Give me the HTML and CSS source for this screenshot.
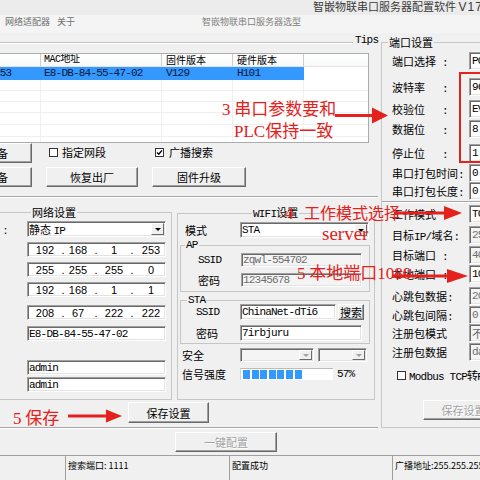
FILE: index.html
```html
<!DOCTYPE html>
<html lang="zh-CN">
<head>
<meta charset="utf-8">
<title>智嵌物联串口服务器配置软件</title>
<link rel="stylesheet" href="styles.css">
</head>
<body>
<div class="win">
  <div class="titlebar">智嵌物联串口服务器配置软件 <span class="ver">V17</span></div>
  <div class="menubar">
    <span class="mi mi1">网络适配器</span>
    <span class="mi mi2">关于</span>
    <span class="mi mi3">智嵌物联串口服务器选型</span>
  </div>
  <div class="main">
    <div class="leftcol">
      <div class="tipsbar"><span class="tline"></span><span class="tlab m">Tips</span></div>
      <div class="tbl">
        <div class="trow thead">
          <span class="c c1"></span><span class="c c2 hm">MAC地址</span><span class="c c3">固件版本</span><span class="c c4">硬件版本</span><span class="c c5"></span>
        </div>
        <div class="trow sel m">
          <span class="c c1"><span class="shift">192.168.1.253</span></span><span class="c c2">E8-DB-84-55-47-02</span><span class="c c3">V129</span><span class="c c4">H101</span><span class="c c5"></span>
        </div>
        <div class="trow"><span class="c c1"></span><span class="c c2"></span><span class="c c3"></span><span class="c c4"></span><span class="c c5"></span></div>
        <div class="trow"><span class="c c1"></span><span class="c c2"></span><span class="c c3"></span><span class="c c4"></span><span class="c c5"></span></div>
        <div class="trow"><span class="c c1"></span><span class="c c2"></span><span class="c c3"></span><span class="c c4"></span><span class="c c5"></span></div>
        <div class="trow h12"><span class="c c1"></span><span class="c c2"></span><span class="c c3"></span><span class="c c4"></span><span class="c c5"></span></div>
        <div class="trow h12"><span class="c c1"></span><span class="c c2"></span><span class="c c3"></span><span class="c c4"></span><span class="c c5"></span></div>
        <div class="trow last"><span class="c c1"></span><span class="c c2"></span><span class="c c3"></span><span class="c c4"></span><span class="c c5"></span></div>
      </div>

      <div class="brow">
        <div class="btn bw bfirst">搜索设备</div>
        <span class="chk ck1"></span><span class="cl cl1">指定网段</span>
        <span class="chk ck2"><svg width="7" height="7" viewBox="0 0 7 7"><path d="M1 3.4 L2.8 5.3 L6 1.4" fill="none" stroke="#000" stroke-width="1.4"/></svg></span><span class="cl cl2">广播搜索</span>
      </div>
      <div class="brow brow2">
        <div class="btn bw bfirst">配置设备</div>
        <div class="btn bw bnext">恢复出厂</div>
        <div class="btn bw bnext bwide">固件升级</div>
      </div>
      <div class="hsep hsep1"></div>

      <div class="groups">
        <fieldset class="grp net">
          <legend>网络设置</legend>
          <div class="nrow mt3 h16"><span class="nl">:</span><div class="fld combo nf"><span>静态 <span class="m">IP</span></span><span class="dd"></span></div></div>
          <div class="nrow mt5"><span class="nl"></span><div class="fld nf ip"><span>192</span><span>.</span><span>168</span><span>.</span><span>1</span><span>.</span><span>253</span></div></div>
          <div class="nrow mt5"><span class="nl"></span><div class="fld nf ip"><span>255</span><span>.</span><span>255</span><span>.</span><span>255</span><span>.</span><span>0</span></div></div>
          <div class="nrow mt5"><span class="nl"></span><div class="fld nf ip"><span>192</span><span>.</span><span>168</span><span>.</span><span>1</span><span>.</span><span>1</span></div></div>
          <div class="nrow mt8"><span class="nl"></span><div class="fld nf ip"><span>208</span><span>.</span><span>67</span><span>.</span><span>222</span><span>.</span><span>222</span></div></div>
          <div class="nrow mt6"><span class="nl"></span><div class="fld nf m">E8-DB-84-55-47-02</div></div>
          <div class="nrow mt19"><span class="nl"></span><div class="fld nf m">admin</div></div>
          <div class="nrow mt2"><span class="nl"></span><div class="fld nf m">admin</div></div>
        </fieldset>

        <fieldset class="grp wifi">
          <legend><span class="m">WIFI</span>设置</legend>
          <div class="wrow mode mt2"><span class="wl">模式</span><div class="fld combo wcombo"><span class="m">STA</span><span class="dd"></span></div></div>
          <fieldset class="grp sub ap">
            <legend class="m">AP</legend>
            <div class="srow mt2"><span class="sl m">SSID</span><div class="fld dis sf m">zqwl-554702</div></div>
            <div class="srow mt6"><span class="sl">密码</span><div class="fld dis sf m">12345678</div></div>
          </fieldset>
          <fieldset class="grp sub sta">
            <legend class="m">STA</legend>
            <div class="trow2 mtm2"><span class="tl m">SSID</span><div class="fld tf1 m">ChinaNet-dTi6</div><div class="btn sbtn">搜索</div></div>
            <div class="trow2 mt5"><span class="tl">密码</span><div class="fld tf2 m">7irbjuru</div></div>
          </fieldset>
          <div class="wrow2 mt4 h14"><span class="wl2">安全</span><div class="fld combo dis sc1"><span></span><span class="dd ddis"></span></div><div class="fld combo dis sc2"><span></span><span class="dd ddis"></span></div></div>
          <div class="wrow2 mt5 h13"><span class="wl2">信号强度</span><div class="bar"><span class="fill"></span></div><span class="pct m">57%</span></div>
        </fieldset>
      </div>

      <div class="saverow"><div class="btn savebtn">保存设置</div></div>
      <div class="hsep hsep2"></div>
      <div class="cfgrow"><div class="btn dis cfgbtn">一键配置</div></div>
    </div>

    <fieldset class="grp port">
      <legend>端口设置</legend>
      <div class="prow mt4"><span class="plab"><span class="pn">端口选择</span><span class="m">:</span></span><div class="fld pf m">PORT1</div></div>
      <div class="prow mt8"><span class="plab"><span class="pn">波特率</span><span class="m">:</span></span><div class="fld pf m">9600</div></div>
      <div class="prow mt4"><span class="plab"><span class="pn">校验位</span><span class="m">:</span></span><div class="fld pf m">EVEN</div></div>
      <div class="prow mt2"><span class="plab"><span class="pn">数据位</span><span class="m">:</span></span><div class="fld pf m">8</div></div>
      <div class="prow mt6"><span class="plab"><span class="pn">停止位</span><span class="m">:</span></span><div class="fld pf m">1</div></div>
      <div class="prow mt2"><span class="plab">串口打包时间<span class="m">:</span></span><div class="fld pf m">0</div></div>
      <div class="prow"><span class="plab">串口打包长度<span class="m">:</span></span><div class="fld pf m">0</div></div>
      <div class="psep"></div>
      <div class="prow mt2"><span class="plab"><span class="pn">工作模式</span><span class="m">:</span></span><div class="fld pf m">TCP Server</div></div>
      <div class="prow mt3"><span class="plab">目标<span class="lm">IP/</span>域名<span class="m">:</span></span><div class="fld pf dis m">255.255.255.255</div></div>
      <div class="prow mt2"><span class="plab"><span class="pn">目标端口</span><span class="m">:</span></span><div class="fld pf dis m">4001</div></div>
      <div class="prow mt1"><span class="plab"><span class="pn">本地端口</span><span class="m">:</span></span><div class="fld pf m">1030</div></div>
      <div class="prow mt4"><span class="plab">心跳包数据<span class="m">:</span></span><div class="fld pf dis m">20 00</div></div>
      <div class="prow mt1"><span class="plab">心跳包间隔<span class="m">:</span></span><div class="fld pf dis m">0</div></div>
      <div class="prow"><span class="plab">注册包模式</span><div class="fld pf dis">不启用</div></div>
      <div class="prow mt1"><span class="plab">注册包数据</span><div class="fld pf dis m">data</div></div>
      <div class="prow mt5"><span class="chk ck3"></span><span class="cl m cl3">Modbus TCP转RTU</span></div>
      <div class="prow mt16 h20"><div class="btn dis pbtn">保存设置</div></div>
    </fieldset>
  </div>

  <div class="status">
    <div class="sp sp1"></div>
    <div class="sp sp2">搜索端口: 1111</div>
    <div class="sp sp3">配置成功</div>
    <div class="sp sp4">广播地址:255.255.255.255</div>
  </div>
</div>

<div class="annot">
  <div class="redbox"></div>
  <div class="rt a1"><span class="rs">3</span> 串口参数要和</div>
  <div class="rt a2"><span class="rs">PLC</span>保持一致</div>
  <div class="rt a3"><span class="rs">4</span></div>
  <div class="rt a4">工作模式选择</div>
  <div class="rt a5"><span class="rs">server</span></div>
  <div class="rt a6"><span class="rs">5</span> 本地端口<span class="rs">1080</span></div>
  <div class="rt a7"><span class="rs">5</span> 保存</div>
  <svg class="arrows" width="480" height="480" viewBox="0 0 480 480">
    <g fill="#e4211b" stroke="none">
      <rect x="335" y="114" width="40" height="3"/>
      <polygon points="372,107.5 388,115.5 372,123.5"/>
      <rect x="394" y="211.5" width="52" height="3"/>
      <polygon points="444,206 462,213 444,220"/>
      <rect x="392" y="274.5" width="57" height="3"/>
      <polygon points="447,269 468,276 447,283"/>
      <rect x="68" y="414.5" width="41" height="3"/>
      <polygon points="106,409.5 122,416 106,422.5"/>
    </g>
  </svg>
</div>
</body>
</html>
```

FILE: styles.css
```css
* { box-sizing: border-box; margin: 0; padding: 0; }
html, body { width: 480px; height: 480px; overflow: hidden; }
body {
  position: relative;
  background: #f0f0f0;
  font-family: "Noto Sans CJK SC", "Liberation Sans", sans-serif;
  font-size: 11px;
  color: #000;
}
.m { font-family: "Liberation Mono", "Noto Sans CJK SC", monospace; letter-spacing: -0.8px; }
.lm { font-family: "Liberation Mono", monospace; letter-spacing: -0.8px; vertical-align: 0; }

.win { width: 480px; height: 480px; overflow: hidden; display: flex; flex-direction: column; }

.titlebar {
  height: 15px; line-height: 12px; padding-left: 313px; white-space: nowrap;
  color: #3a3a3a; font-size: 11px; background: #ececec;
}
.ver { font-family: "Liberation Sans", sans-serif; font-size: 12px; letter-spacing: 1px; }
.menubar {
  height: 18px; display: flex; align-items: flex-start; padding-top: 1px;
  font-size: 9px; line-height: 12px; color: #707070; white-space: nowrap; background: #f4f4f4;
}
.mi1 { margin-left: 5px; }
.mi2 { margin-left: 7px; }
.mi3 { margin-left: 127px; color: #808080; }

.main { height: 422px; display: grid; grid-template-columns: 381px 99px; }
.leftcol { display: flex; flex-direction: column; width: 381px; }

.brow > *, .nrow > *, .wrow > *, .wrow2 > *, .srow > *, .trow2 > *, .prow > *, .plab > * { flex-shrink: 0; }

.tipsbar { height: 20px; display: flex; align-items: center; }
.tline { width: 353px; height: 2px; border-top: 1px solid #c4c4c4; border-bottom: 1px solid #fff; }
.tlab { align-self: flex-start; margin-top: 1px; margin-left: 2px; line-height: 12px; }

/* table */
.tbl {
  width: 369px; height: 90px; background: #fff; overflow: hidden;
  border: 1px solid #acacac; border-left: 0;
}
.trow { display: flex; height: 11px; border-bottom: 1px solid #efefef; line-height: 11px; }
.trow.h12 { height: 12px; }
.trow.last { border-bottom: 0; height: 6px; }
.trow.thead {
  height: 13px; line-height: 12px; font-size: 10px; border-bottom: 1px solid #e2e2e2;
  background: linear-gradient(#ffffff, #f7f8f9);
}
.trow.sel { height: 13px; line-height: 13px; border-bottom: 0; }
.c { border-right: 1px solid #f0f0f0; overflow: hidden; white-space: nowrap; padding-left: 4px; flex-shrink: 0; }
.thead .c { border-right-color: #cdcdcd; }
.c1 { width: 41px; padding-left: 0; }
.c2 { width: 121px; padding-left: 3px; }
.c3 { width: 71px; }
.c4 { width: 71px; }
.c5 { flex: 1 1 0; border-right: 0; }
.hm { font-family: "Liberation Mono", "Noto Sans CJK SC", monospace; letter-spacing: -0.5px; }
.sel .c1, .sel .c2, .sel .c3, .sel .c4 { background: #3399ff; color: #06173a; border-right-color: #3399ff; }
.shift { margin-left: -64px; }

/* buttons */
.btn {
  display: flex; align-items: center; justify-content: center; height: 20px;
  background: #f0f0f0; white-space: nowrap; font-size: 11px;
  border: 1px solid; border-color: #ffffff #696969 #696969 #ffffff;
  box-shadow: inset -1px -1px 0 #a0a0a0;
}
.btn.dis { color: #a3a3a3; text-shadow: 1px 1px 0 #fff; }
.brow { height: 20px; display: flex; align-items: center; }
.brow2 { margin-top: 4px; }
.bw { width: 92px; }
.bfirst { margin-left: -60px; }
.bnext { margin-left: 14px; }
.bwide { width: 94px; }

.chk {
  width: 9px; height: 9px; border: 1px solid #333; background: #fff;
  display: flex; align-items: center; justify-content: center; margin-bottom: 2px;
}
.cl { margin-bottom: 2px; white-space: nowrap; }
.ck1 { margin-left: 17px; }
.cl1 { margin-left: 4px; }
.ck2 { margin-left: 49px; }
.cl2 { margin-left: 5px; }
.ck3 { margin-left: 5px; margin-bottom: 0; }
.cl3 { margin-left: 3px; margin-bottom: 0; }

.hsep { width: 378px; height: 2px; border-top: 1px solid #a8a8a8; border-bottom: 1px solid #fff; }
.hsep1 { margin-top: 9px; }
.hsep2 { margin-top: 4px; }

/* group boxes */
.grp { border: 1px solid #c6c6c6; min-width: 0; padding: 0; }
.grp legend { padding: 0 1px; line-height: 12px; font-size: 11px; }
.groups { display: flex; align-items: flex-start; margin-top: 8px; height: 194px; }
.groups > * { flex-shrink: 0; }
.net { width: 236px; height: 194px; margin-left: -64px; }
.net legend { margin-left: 94px; }
.wifi { width: 198px; height: 194px; margin-left: 5px; }
.wifi legend { margin-left: 74px; }

.mt1 { margin-top: 1px; } .mt2 { margin-top: 2px; } .mt3 { margin-top: 3px; }
.mt4 { margin-top: 4px; } .mt5 { margin-top: 5px; } .mt6 { margin-top: 6px; }
.mt8 { margin-top: 8px; } .mt16 { margin-top: 16px; } .mt19 { margin-top: 19px; }
.mtm2 { margin-top: -2px; }

/* fields */
.fld {
  background: #fff; height: 15px; display: flex; align-items: center;
  padding-left: 1px; white-space: nowrap; overflow: hidden;
  border: 1px solid; border-color: #a0a0a0 #ffffff #ffffff #a0a0a0;
  box-shadow: inset 1px 1px 0 #696969, inset -1px -1px 0 #e3e3e3;
}
.fld.dis { background: #f4f4f4; color: #6d6d6d; }
.combo { padding-right: 1px; }
.dd {
  margin-left: auto; width: 13px; height: calc(100% - 2px);
  background: #f0f0f0; border: 1px solid; border-color: #fff #696969 #696969 #fff;
  display: flex; align-items: center; justify-content: center;
}
.dd::after {
  content: ""; border-top: 3px solid #000;
  border-left: 3px solid transparent; border-right: 3px solid transparent;
}
.ddis::after { border-top-color: #a0a0a0; }

.nrow { display: flex; align-items: center; height: 15px; }
.nrow.h16 { height: 16px; }
.nrow.h16 .fld { height: 16px; }
.nl { width: 90px; padding-left: 67px; }
.nf { width: 139px; }
.ip {
  display: grid; grid-template-columns: 32px 4px 26px 10px 26px 10px 1fr;
  font-family: "Liberation Sans", sans-serif; font-size: 11px; text-align: center;
}

.wrow { display: flex; align-items: center; height: 16px; padding-left: 7px; }
.wl { width: 55px; }
.wcombo { width: 129px; height: 16px; }
.sub { width: 190px; margin-left: 2px; }
.ap { height: 53px; margin-top: 1px; }
.ap legend { margin-left: 4px; }
.sta { height: 50px; margin-top: 2px; }
.sta legend { margin-left: 6px; }
.srow { display: flex; align-items: center; height: 14px; padding-left: 17px; }
.sl { width: 43px; }
.sf { width: 121px; height: 14px; }
.trow2 { display: flex; align-items: center; height: 16px; padding-left: 15px; }
.tl { width: 44px; }
.tf1 { width: 96px; height: 16px; }
.tf2 { width: 122px; height: 16px; }
.sbtn { width: 26px; height: 16px; margin-left: 2px; }
.wrow2 { display: flex; align-items: center; padding-left: 4px; }
.h14 { height: 14px; }
.h13 { height: 13px; }
.wl2 { width: 58px; white-space: nowrap; }
.sc1 { width: 74px; height: 14px; }
.sc2 { width: 49px; height: 14px; margin-left: 4px; }
.bar {
  width: 93px; height: 12px; background: #fff; padding: 1px 0 0 2px;
  border-top: 1px solid #bcbcbc; border-left: 1px solid #d4d4d4;
}
.fill {
  display: block; width: 60px; height: 9px;
  background: repeating-linear-gradient(90deg, #3399ff 0 7px, transparent 7px 8.6px);
}
.pct { margin-left: 4px; }

.saverow { display: flex; margin-top: 2px; height: 21px; }
.savebtn { margin-left: 128px; width: 81px; height: 21px; }
.cfgrow { display: flex; margin-top: 3px; height: 20px; }
.cfgbtn { margin-left: 175px; width: 102px; }

/* right port settings */
.port { width: 130px; height: 392px; margin-top: 3px; }
.port legend { margin-left: 6px; }
.prow { display: flex; align-items: center; height: 18px; padding-left: 10px; }
.prow.h20 { height: 20px; }
.plab { width: 77px; display: flex; align-items: baseline; white-space: nowrap; }
.pn { width: 50px; }
.pf { width: 60px; height: 18px; padding-left: 2px; }
.psep { height: 2px; margin-top: 1px; border-top: 1px solid #a8a8a8; border-bottom: 1px solid #fff; }
.pbtn { margin-left: 31px; width: 81px; }

/* status bar */
.status { height: 25px; display: flex; border-top: 1px solid #a0a0a0; font-size: 9px; line-height: 12px; }
.sp { padding: 4px 0 0 2px; white-space: nowrap; overflow: hidden; border-left: 1px solid #a0a0a0; flex-shrink: 0; }
.sp1 { width: 65px; border-left: 0; }
.sp2 { width: 164px; }
.sp3 { width: 163px; }
.sp4 { flex: 1 1 0; }

/* annotations (overlay) */
.annot { position: absolute; left: 0; top: 0; width: 480px; height: 480px; pointer-events: none; }
.redbox { position: absolute; left: 459px; top: 72px; width: 40px; height: 91px; border: 2px solid #e4211b; }
.rt {
  position: absolute; color: #e4211b; font-size: 17px; line-height: 17px; white-space: nowrap;
  font-family: "Noto Sans CJK SC", sans-serif;
}
.rs { font-family: "Liberation Serif", serif; }
.a1 { left: 222px; top: 99px; }
.a2 { left: 234px; top: 121px; }
.a3 { left: 285px; top: 203px; }
.a4 { left: 304px; top: 204px; font-size: 16px; }
.a5 { left: 322px; top: 223px; font-size: 19px; }
.a6 { left: 297px; top: 263px; }
.a7 { left: 13px; top: 408px; }
.arrows { position: absolute; left: 0; top: 0; }
```
